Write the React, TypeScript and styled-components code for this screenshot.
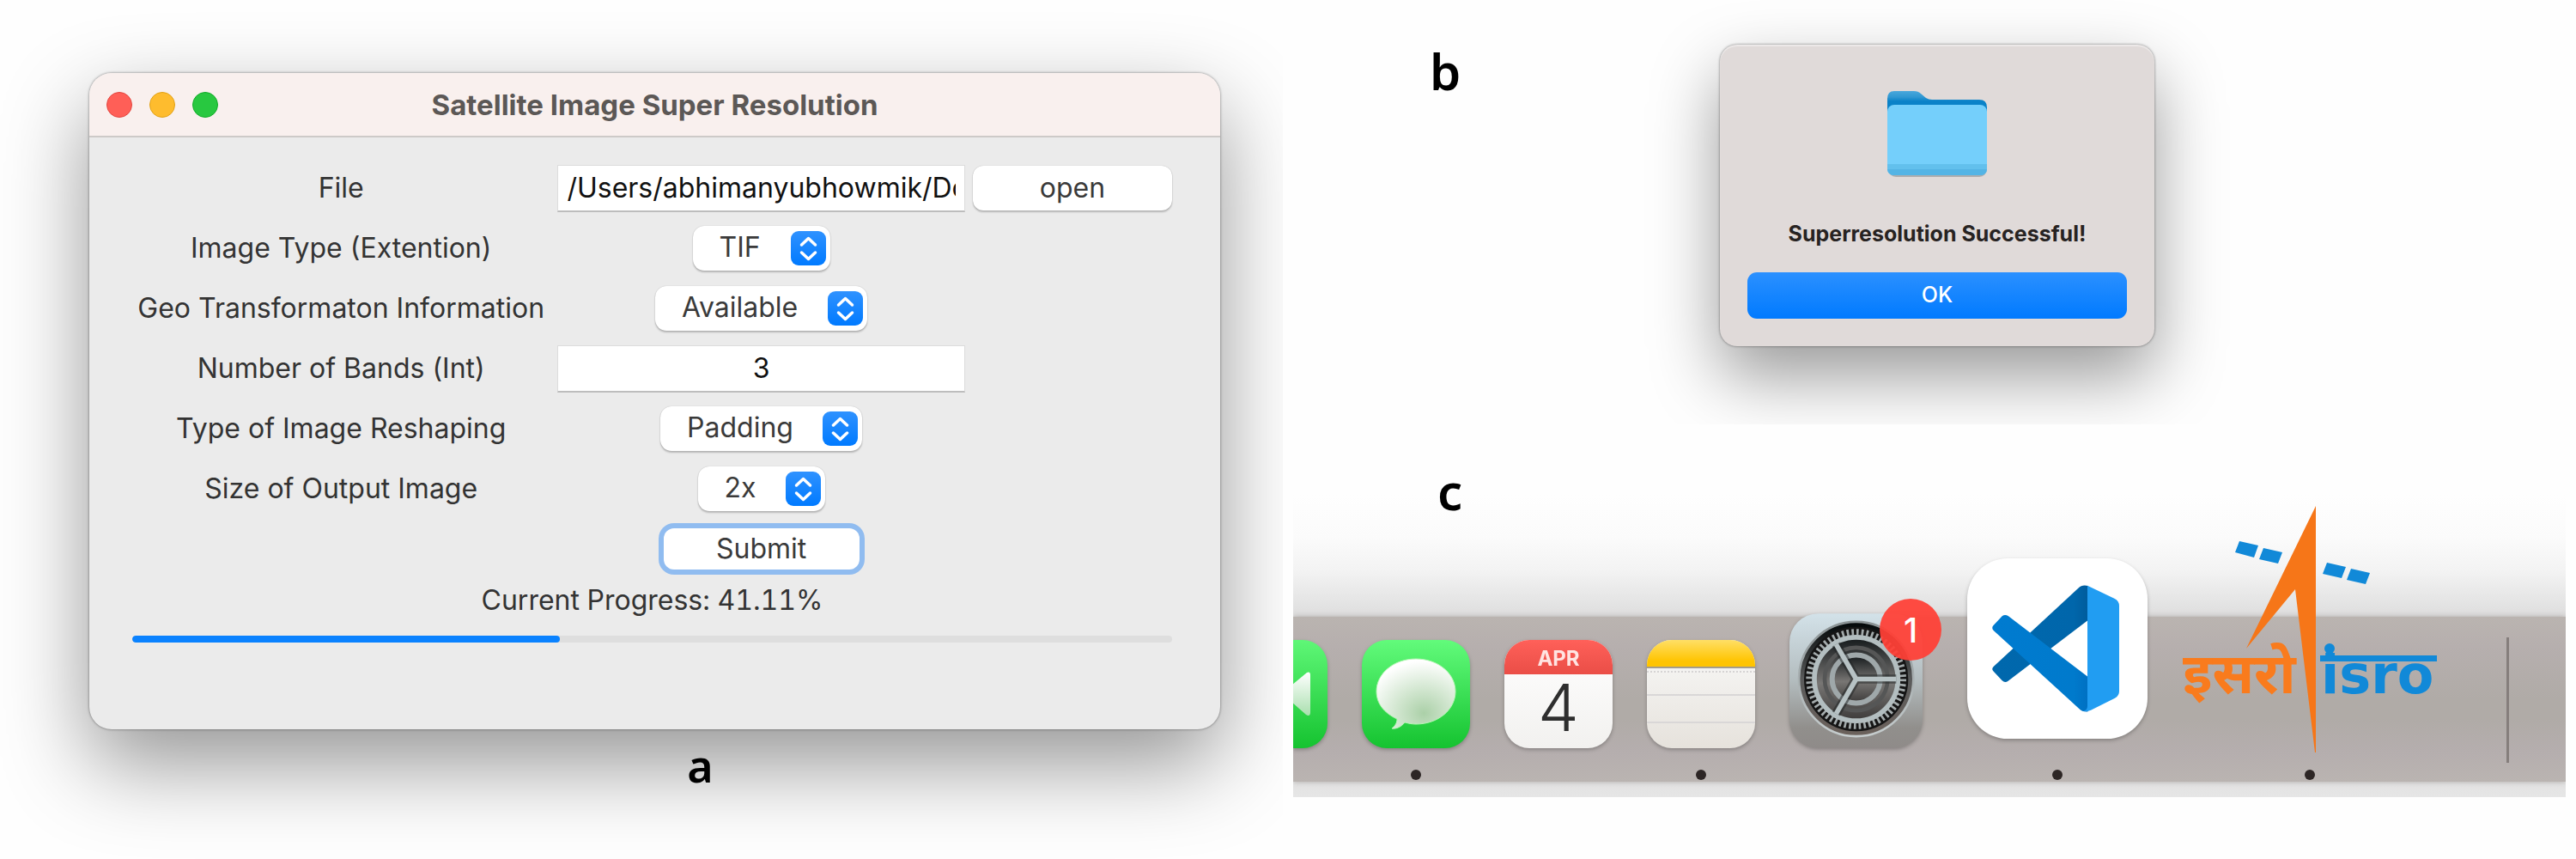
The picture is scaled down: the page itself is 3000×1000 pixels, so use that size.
import React from "react";
import styled, { createGlobalStyle } from "styled-components";

const UI_FONT = `Inter, "Liberation Sans", sans-serif`;
const LABEL_FONT = `"Noto Sans", "Open Sans", sans-serif`;

const GlobalStyle = createGlobalStyle`
  *, *::before, *::after { box-sizing: border-box; }
  body { margin: 0; background: #ffffff; font-family: ${UI_FONT}; }
`;

const Page = styled.main`
  display: grid;
  grid-template-columns: 1494fr 1494fr;
  column-gap: 12px;
  min-height: 100vh;
  background: #fefefe;
`;

const Letter = styled.figcaption<{ $size: number }>`
  font-family: ${LABEL_FONT};
  font-weight: 600;
  font-size: ${(p) => p.$size}px;
  line-height: 64px;
  color: #000000;
`;

/* ---------- main window ---------- */

const WindowFigure = styled.figure`
  margin: 0;
  padding: 85px 73px 0 104px;
  display: flex;
  flex-direction: column;
  overflow: hidden;

  ${Letter} {
    align-self: center;
    padding: 10px 0 0 106px;
  }
`;

const AppWindow = styled.section`
  border-radius: 26px;
  background: #ebebeb;
  overflow: hidden;
  box-shadow: 0 0 3px rgba(0, 0, 0, 0.5), 0 40px 100px rgba(0, 0, 0, 0.42);
`;

const TitleBar = styled.header`
  display: grid;
  grid-template-columns: 1fr auto 1fr;
  align-items: center;
  height: 75px;
  padding: 0 20px;
  background: #f9f0ee;
  border-bottom: 2px solid #cdcac8;
`;

const Lights = styled.div`
  display: flex;
  gap: 20px;
`;

const Light = styled.button<{ $fill: string; $edge: string }>`
  width: 30px;
  height: 30px;
  padding: 0;
  border: 1px solid ${(p) => p.$edge};
  border-radius: 50%;
  background: ${(p) => p.$fill};
`;

const Title = styled.h1`
  margin: 0;
  font-size: 33px;
  line-height: 40px;
  font-weight: 700;
  color: #5c5856;
`;

const Form = styled.form`
  padding: 24px 56px 101px 50px;
`;

const Row = styled.div`
  display: grid;
  grid-template-columns: 490fr 484fr 236fr;
  align-items: center;
  justify-items: center;
  min-height: 70px;
`;

const Label = styled.label`
  padding-right: 4px;
  font-size: 32px;
  line-height: 40px;
  color: #333333;
  white-space: nowrap;
`;

const TextField = styled.input`
  width: calc(100% - 10px);
  height: 55px;
  padding: 0 10px;
  border: 1px solid #dcdcdc;
  border-bottom: 2px solid #bdbdbd;
  border-radius: 0;
  background: #ffffff;
  font: 32px/40px ${UI_FONT};
  color: #111111;
  outline: none;
`;

const NumberField = styled(TextField)`
  text-align: center;
`;

const Button = styled.button<{ $focus?: boolean }>`
  width: ${(p) => (p.$focus ? "228px" : "calc(100% - 4px)")};
  height: ${(p) => (p.$focus ? 48 : 52)}px;
  justify-self: ${(p) => (p.$focus ? "center" : "end")};
  padding: 0;
  border: 0;
  border-radius: 12px;
  background: #ffffff;
  box-shadow: ${(p) =>
    p.$focus ? "0 0 0 6px #90bcf0" : "0 0 1px rgba(0,0,0,.3), 0 2px 2px rgba(0,0,0,.22)"};
  font: 32px/40px ${UI_FONT};
  color: #3a3a3a;
`;

const SelectBox = styled.span`
  position: relative;
  display: inline-flex;
`;

const Select = styled.select`
  appearance: none;
  height: 52px;
  padding: 0 80px 2px 31px;
  border: 0;
  border-radius: 13px;
  background: #ffffff;
  box-shadow: 0 0 1px rgba(0, 0, 0, 0.3), 0 2px 2px rgba(0, 0, 0, 0.22);
  font: 32px/40px ${UI_FONT};
  color: #3a3a3a;
`;

const Stepper = styled.svg`
  position: absolute;
  right: 5px;
  top: 6px;
  width: 41px;
  height: 40px;
  pointer-events: none;
`;

const Status = styled.output`
  display: block;
  padding: 3px 0 0;
  text-align: center;
  font-size: 32px;
  line-height: 44px;
  font-variant-numeric: tabular-nums;
  color: #333333;
`;

const Track = styled.div`
  height: 8px;
  margin-top: 19px;
  border-radius: 4px;
  background: #dedede;
  overflow: hidden;
`;

const Fill = styled.div`
  height: 100%;
  border-radius: 4px;
  background: #0a82ff;
`;

function Picker({ id, value }: { id: string; value: string }) {
  return (
    <SelectBox>
      <Select id={id} defaultValue={value}>
        <option>{value}</option>
      </Select>
      <Stepper viewBox="0 0 41 40" aria-hidden="true">
        <defs>
          <linearGradient id={`${id}-blue`} x1="0" y1="0" x2="0" y2="1">
            <stop offset="0" stopColor="#2f92ff" />
            <stop offset="1" stopColor="#007aff" />
          </linearGradient>
        </defs>
        <rect width="41" height="40" rx="9" fill={`url(#${id}-blue)`} />
        <path
          d="M12.500 16 L20.500 8.500 L28.500 16 M12.500 25 L20.500 32.500 L28.500 25"
          fill="none"
          stroke="#ffffff"
          strokeWidth="3.500"
          strokeLinecap="round"
          strokeLinejoin="round"
        />
      </Stepper>
    </SelectBox>
  );
}

/* ---------- alert ---------- */

const RightColumn = styled.div`
  display: flex;
  flex-direction: column;
  padding-right: 12px;
  min-width: 0;
`;

const AlertFigure = styled.figure`
  margin: 0;
  display: grid;
  grid-template-columns: 404fr 692fr 386fr;
  height: 494px;

  ${Letter} {
    padding: 51px 0 0 159px;
  }
`;

const AlertStage = styled.div`
  display: flex;
  justify-content: center;
  align-items: flex-start;
  padding-top: 52px;
  overflow: hidden;
`;

const Alert = styled.section`
  display: flex;
  flex-direction: column;
  align-items: center;
  width: 506px;
  padding: 53px 32px 32px;
  border-radius: 20px;
  background: #e0dad9;
  box-shadow: inset 0 2px 1px rgba(255, 255, 255, 0.4), 0 0 3px rgba(0, 0, 0, 0.5),
    0 35px 80px rgba(0, 0, 0, 0.4);
`;

const FolderIcon = styled.svg`
  width: 118px;
  height: 102px;
`;

const AlertText = styled.h2`
  margin: 49px 0 0;
  font-size: 25px;
  line-height: 32px;
  font-weight: 700;
  color: #272322;
`;

const OkButton = styled.button`
  width: 100%;
  height: 54px;
  margin-top: 29px;
  padding: 0 0 2px;
  border: 0;
  border-radius: 11px;
  background: linear-gradient(#2b90ff, #007aff);
  font: 500 25px/32px ${UI_FONT};
  color: #ffffff;
`;

/* ---------- dock ---------- */

const DockFigure = styled.figure`
  margin: 0;
  padding-bottom: 18px;
  overflow: hidden;
  background: linear-gradient(
    #fefefe 0,
    #fefefe 80px,
    #fbfbfb 132px,
    #f3f3f3 170px,
    #dfdfdf 220px,
    #e3e3e3 420px,
    #e6e6e6 434px
  );

  ${Letter} {
    height: 224px;
    padding: 46px 0 0 168px;
  }
`;

const Dock = styled.nav`
  display: flex;
  align-items: flex-end;
  height: 192px;
  background: linear-gradient(#bab4b0 0%, #b6afae 18%, #b0aba7 50%, #b0aba7 62%, #b5aeae 82%, #bab4b1 100%);
  box-shadow: 0 0 6px rgba(160, 155, 152, 0.8);
`;

const DockItem = styled.div<{ $before?: number }>`
  position: relative;
  display: flex;
  flex-direction: column;
  align-items: center;
  flex: none;
  margin-left: ${(p) => p.$before ?? 40}px;
`;

const IconArea = styled.div<{ $lift?: number; $flat?: boolean }>`
  display: flex;
  margin-bottom: ${(p) => p.$lift ?? 25}px;
  filter: ${(p) => (p.$flat ? "none" : "drop-shadow(0 2px 2px rgba(0, 0, 0, 0.25))")};
`;

const Dot = styled.span<{ $on?: boolean }>`
  width: 12px;
  height: 12px;
  margin-bottom: 2px;
  border-radius: 50%;
  background: ${(p) => (p.$on ? "#2d2625" : "transparent")};
`;

const Tile = styled.div`
  display: flex;
  flex-direction: column;
  width: 126px;
  height: 126px;
  border-radius: 29px;
  overflow: hidden;
`;

const CalendarTile = styled(Tile)`
  background: linear-gradient(#ffffff, #f2f1ef);
  text-align: center;
`;

const Month = styled.span`
  height: 40px;
  background: linear-gradient(#ff6059, #ea4e47);
  font-size: 24px;
  line-height: 43px;
  font-weight: 700;
  color: #ffe4e2;
`;

const Day = styled.span`
  font-size: 76px;
  line-height: 77px;
  font-weight: 300;
  color: #2e2e2e;
`;

const NotesTile = styled(Tile)`
  background: linear-gradient(#f9f9f8, #e6e2dc);
`;

const NotesTop = styled.span`
  height: 33px;
  background: linear-gradient(#ffdf66, #ffc400 80%);
  border-bottom: 2px solid #a59d88;
`;

const NotesPerf = styled.span`
  height: 5px;
  border-bottom: 2px dotted #d6d4d4;
`;

const NotesLine = styled.span<{ $height: number }>`
  height: ${(p) => p.$height}px;
  border-bottom: 2px solid #d9d7d7;
`;

const Badge = styled.span`
  position: absolute;
  top: -17px;
  right: -22px;
  width: 72px;
  height: 72px;
  border-radius: 50%;
  background: rgba(255, 64, 54, 0.94);
  font-size: 39px;
  line-height: 74px;
  font-weight: 500;
  text-align: center;
  color: #ffffff;
`;

const Divider = styled.span`
  flex: none;
  width: 3px;
  height: 146px;
  margin: 0 0 22px 80px;
  background: #857e7c;
`;

const Art = styled.svg<{ $w: number; $h: number }>`
  display: block;
  width: ${(p) => p.$w}px;
  height: ${(p) => p.$h}px;
`;

function FaceTimeIcon() {
  return (
    <Art $w={40} $h={126} viewBox="86 0 40 126" role="img" aria-label="FaceTime">
      <defs>
        <linearGradient id="green" x1="0" y1="0" x2="0" y2="1">
          <stop offset="0" stopColor="#5ff777" />
          <stop offset="1" stopColor="#15c330" />
        </linearGradient>
        <linearGradient id="lens" x1="0" y1="0" x2="0" y2="1">
          <stop offset="0" stopColor="#ffffff" />
          <stop offset="1" stopColor="#a9dfae" />
        </linearGradient>
      </defs>
      <rect width="126" height="126" rx="29" fill="url(#green)" />
      <path d="M84 53 L102 38 Q106 36 106 41 V84 Q106 90 101 87 L84 72 Z" fill="url(#lens)" />
    </Art>
  );
}

function MessagesIcon() {
  return (
    <Art $w={126} $h={126} viewBox="0 0 126 126" role="img" aria-label="Messages">
      <defs>
        <linearGradient id="msg-green" x1="0" y1="0" x2="0" y2="1">
          <stop offset="0" stopColor="#62fb7b" />
          <stop offset="1" stopColor="#15c330" />
        </linearGradient>
        <radialGradient id="bubble" cx="0.6" cy="0.78" r="0.75">
          <stop offset="0" stopColor="#abd0a8" />
          <stop offset="0.5" stopColor="#d5e8d3" />
          <stop offset="1" stopColor="#ffffff" />
        </radialGradient>
      </defs>
      <rect width="126" height="126" rx="29" fill="url(#msg-green)" />
      <path
        d="M63 22 C89 22 109 39 109 60 C109 81 89 98 63 98 C58 98 54 97 50 96 C46 101 40 104 35 103 C39 100 41 96 41 92 C26 85 17 74 17 60 C17 39 37 22 63 22 Z"
        fill="url(#bubble)"
        stroke="#b5f5b4"
        strokeWidth="1"
      />
    </Art>
  );
}

function SettingsIcon() {
  return (
    <Art $w={155} $h={157} viewBox="137 463 465 470" role="img" aria-label="System Preferences">
      <defs>
        <linearGradient id="plate" x1="0" y1="0" x2="0" y2="1">
          <stop offset="0" stopColor="#d3e2e9" />
          <stop offset="0.5" stopColor="#b3bcbe" />
          <stop offset="0.85" stopColor="#918f8c" />
          <stop offset="1" stopColor="#8f8b89" />
        </linearGradient>
        <linearGradient id="well" x1="0" y1="0" x2="0" y2="1">
          <stop offset="0" stopColor="#000506" />
          <stop offset="0.5" stopColor="#5a5b5b" />
          <stop offset="1" stopColor="#6c625c" />
        </linearGradient>
        <linearGradient id="inner" x1="0" y1="0" x2="0" y2="1">
          <stop offset="0" stopColor="#13181a" />
          <stop offset="0.55" stopColor="#787674" />
          <stop offset="1" stopColor="#3c3a39" />
        </linearGradient>
        <linearGradient id="rim" x1="0" y1="0" x2="0" y2="1">
          <stop offset="0" stopColor="#8a9294" />
          <stop offset="1" stopColor="#c6cdce" />
        </linearGradient>
      </defs>
      <rect x="137" y="463" width="465" height="470" rx="100" fill="url(#plate)" />
      <circle cx="370" cy="692" r="200" fill="url(#well)" stroke="url(#rim)" strokeWidth="8" />
      <circle cx="370" cy="692" r="168" fill="none" stroke="#151515" strokeWidth="28" />
      <circle cx="370" cy="692" r="164" fill="none" stroke="#a3aaab" strokeWidth="22" strokeDasharray="8 9.170" />
      <circle cx="370" cy="692" r="146" fill="url(#inner)" stroke="#b3bec0" strokeWidth="17" />
      <circle cx="370" cy="692" r="110" fill="none" stroke="#555656" strokeWidth="14" />
      <circle cx="370" cy="692" r="84" fill="url(#inner)" stroke="#9fa8aa" strokeWidth="18" />
      <path
        d="M370 692 L510 692 M370 692 L300 571 M370 692 L300 813"
        stroke="#1f2324"
        strokeWidth="32"
        opacity="0.5"
      />
      <path d="M370 692 L510 692 M370 692 L300 571 M370 692 L300 813" stroke="#b7c2c4" strokeWidth="17" />
    </Art>
  );
}

function CodeIcon() {
  return (
    <Art $w={210} $h={210} viewBox="760 270 630 630" role="img" aria-label="Visual Studio Code">
      <defs>
        <linearGradient id="code-back" x1="0" y1="0" x2="1" y2="0">
          <stop offset="0" stopColor="#0068ad" />
          <stop offset="0.85" stopColor="#0066ab" />
          <stop offset="1" stopColor="#005c9c" />
        </linearGradient>
        <linearGradient id="code-front" x1="0" y1="0" x2="1" y2="0">
          <stop offset="0" stopColor="#007bd0" />
          <stop offset="0.85" stopColor="#007acc" />
          <stop offset="1" stopColor="#0070c2" />
        </linearGradient>
      </defs>
      <rect x="760" y="270" width="630" height="630" rx="142" fill="#ffffff" />
      <path
        d="M1182 366 Q1162 360 1148 374 L852 648 Q844 656 851 664 L882 697 Q892 706 903 698 L1182 486 Z"
        fill="url(#code-back)"
      />
      <path
        d="M882 472 Q892 464 904 472 L1182 684 V805 Q1164 808 1150 794 L852 522 Q844 513 851 505 Z"
        fill="url(#code-front)"
      />
      <path
        d="M1180 365 L1274 410 Q1291 418 1291 436 V734 Q1291 750 1276 758 L1192 800 Q1176 807 1162 802 Q1180 804 1180 786 Z"
        fill="#219df2"
      />
    </Art>
  );
}

function IsroLogo() {
  return (
    <Art $w={298} $h={293} viewBox="0 0 298 293" role="img" aria-label="ISRO">
      <path d="M156 3 L75 169 L132 100 L155 290 L156 290 Z" fill="#f67618" />
      <path
        d="M67 44 L89 49 L84 63 L62 57 Z M95 52 L117 57 L112 70 L90 65 Z M169 69 L191 74 L186 87 L164 82 Z M197 76 L219 81 L214 94 L192 89 Z"
        fill="#1189d8"
      />
      <text x="1" y="221" fill="#f97b1d" fontFamily='"Noto Sans Devanagari", "Noto Sans", sans-serif' fontSize="66" fontWeight="700">
        इसरो
      </text>
      <rect x="161" y="177" width="136" height="7" fill="#1189d8" />
      <circle cx="172" cy="169" r="6" fill="#1189d8" />
      <text x="162" y="221" fill="#1189d8" fontFamily='"DejaVu Sans", sans-serif' fontSize="62" fontWeight="700">
        isro
      </text>
    </Art>
  );
}

const PROGRESS = 41.11;

export default function App() {
  return (
    <Page>
      <GlobalStyle />
      <WindowFigure>
        <AppWindow>
          <TitleBar>
            <Lights>
              <Light type="button" aria-label="Close" $fill="#ff5f57" $edge="#e2463f" />
              <Light type="button" aria-label="Minimize" $fill="#febc2e" $edge="#e1a116" />
              <Light type="button" aria-label="Zoom" $fill="#28c840" $edge="#12ac28" />
            </Lights>
            <Title>Satellite Image Super Resolution</Title>
          </TitleBar>
          <Form onSubmit={(e) => e.preventDefault()}>
            <Row>
              <Label htmlFor="file">File</Label>
              <TextField id="file" type="text" defaultValue="/Users/abhimanyubhowmik/Documents" />
              <Button type="button">open</Button>
            </Row>
            <Row>
              <Label htmlFor="type">Image Type (Extention)</Label>
              <Picker id="type" value="TIF" />
            </Row>
            <Row>
              <Label htmlFor="geo">Geo Transformaton Information</Label>
              <Picker id="geo" value="Available" />
            </Row>
            <Row>
              <Label htmlFor="bands">Number of Bands (Int)</Label>
              <NumberField id="bands" type="text" inputMode="numeric" defaultValue="3" />
            </Row>
            <Row>
              <Label htmlFor="reshape">Type of Image Reshaping</Label>
              <Picker id="reshape" value="Padding" />
            </Row>
            <Row>
              <Label htmlFor="size">Size of Output Image</Label>
              <Picker id="size" value="2x" />
            </Row>
            <Row>
              <span />
              <Button type="submit" $focus>
                Submit
              </Button>
            </Row>
            <Status>Current Progress: {PROGRESS}%</Status>
            <Track role="progressbar" aria-label="Progress" aria-valuenow={PROGRESS}>
              <Fill style={{ width: `${PROGRESS}%` }} />
            </Track>
          </Form>
        </AppWindow>
        <Letter $size={52}>a</Letter>
      </WindowFigure>

      <RightColumn>
        <AlertFigure>
          <Letter $size={58}>b</Letter>
          <AlertStage>
            <Alert role="alertdialog" aria-labelledby="alert-text">
              <FolderIcon viewBox="0 0 118 102" aria-hidden="true">
                <defs>
                  <linearGradient id="folder-back" x1="0" y1="0" x2="0" y2="1">
                    <stop offset="0" stopColor="#4aa8dc" />
                    <stop offset="0.12" stopColor="#2f97d2" />
                    <stop offset="0.2" stopColor="#0a82c8" />
                  </linearGradient>
                </defs>
                <rect x="2" y="20" width="115" height="81" rx="9" fill="#8b8f91" opacity="0.6" />
                <path
                  d="M1 10 Q1 1 9 1 H32 Q37 1 40 4 L46 9 Q49 11 53 11 H108 Q117 11 117 20 V60 H1 Z"
                  fill="url(#folder-back)"
                />
                <rect x="1" y="17" width="116" height="82" rx="8" fill="#74cffb" />
                <path d="M1 86 H117 V91 Q117 99 109 99 H9 Q1 99 1 91 Z" fill="#62c0ed" />
                <path d="M1 92 H117 Q116 99 109 99 H9 Q2 99 1 92 Z" fill="#54b4e5" />
              </FolderIcon>
              <AlertText id="alert-text">Superresolution Successful!</AlertText>
              <OkButton type="button">OK</OkButton>
            </Alert>
          </AlertStage>
        </AlertFigure>

        <DockFigure>
          <Letter $size={58}>c</Letter>
          <Dock aria-label="Dock">
            <DockItem $before={0}>
              <IconArea>
                <FaceTimeIcon />
              </IconArea>
              <Dot />
            </DockItem>
            <DockItem>
              <IconArea>
                <MessagesIcon />
              </IconArea>
              <Dot $on />
            </DockItem>
            <DockItem>
              <IconArea>
                <CalendarTile>
                  <Month>APR</Month>
                  <Day>4</Day>
                </CalendarTile>
              </IconArea>
              <Dot />
            </DockItem>
            <DockItem>
              <IconArea>
                <NotesTile>
                  <NotesTop />
                  <NotesPerf />
                  <NotesLine $height={27} />
                  <NotesLine $height={32} />
                </NotesTile>
              </IconArea>
              <Dot $on />
            </DockItem>
            <DockItem>
              <IconArea>
                <SettingsIcon />
              </IconArea>
              <Dot />
              <Badge>1</Badge>
            </DockItem>
            <DockItem $before={52}>
              <IconArea $lift={36}>
                <CodeIcon />
              </IconArea>
              <Dot $on />
            </DockItem>
            <DockItem>
              <IconArea $lift={17} $flat>
                <IsroLogo />
              </IconArea>
              <Dot $on />
            </DockItem>
            <Divider />
          </Dock>
        </DockFigure>
      </RightColumn>
    </Page>
  );
}
